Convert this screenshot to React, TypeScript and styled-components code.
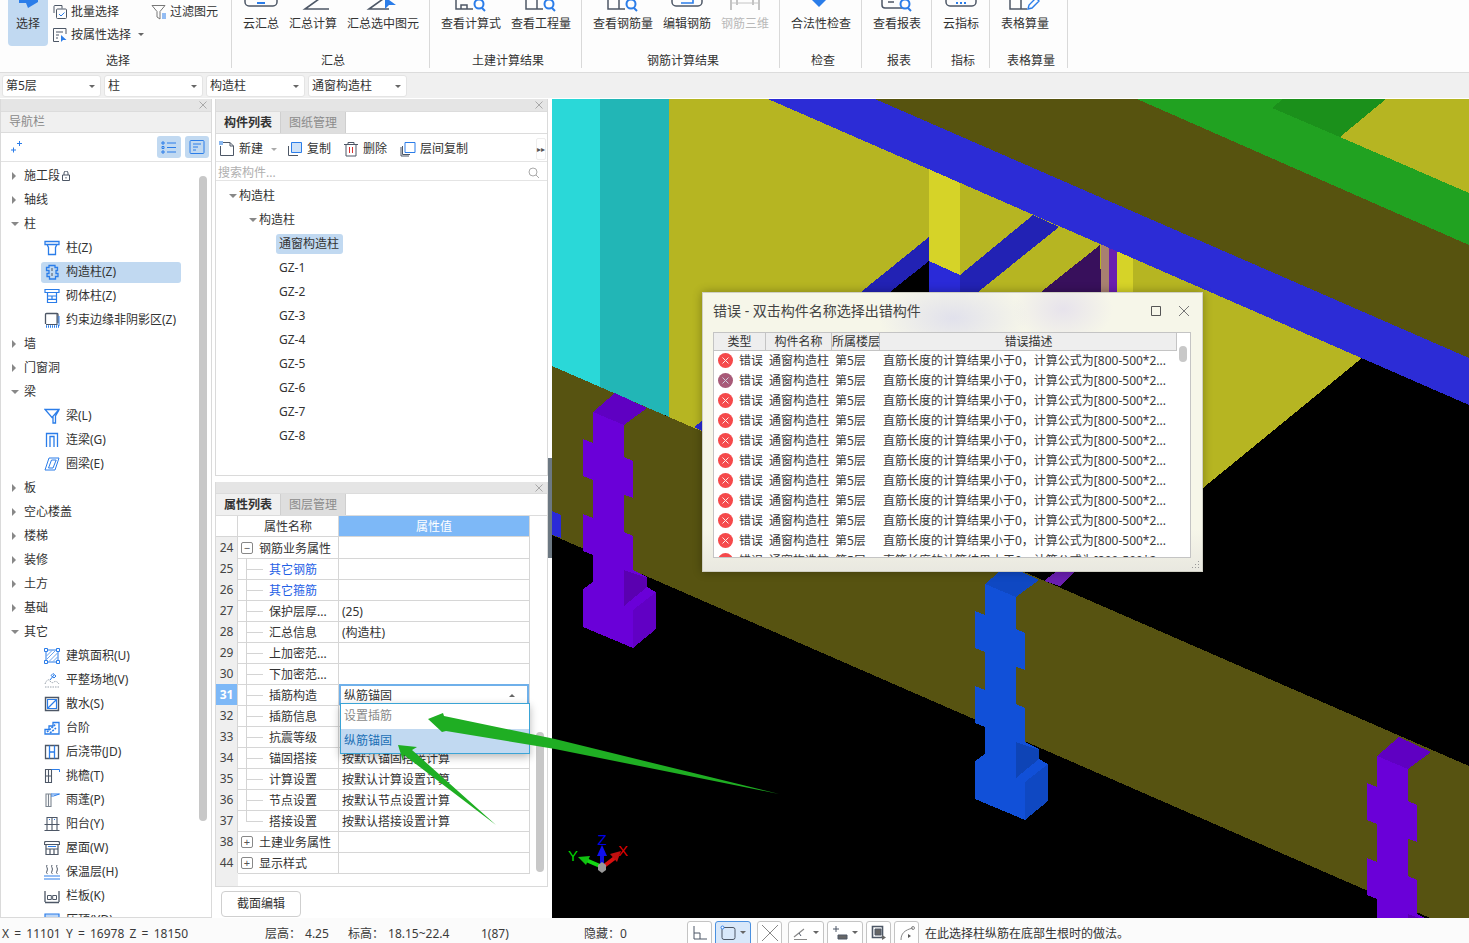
import React from 'react';
import styled, { createGlobalStyle } from 'styled-components';

const B = '#2b7de9';
const D = '#4d5766';
const G = '#c4c4c4';
const HILITE = '#c1d9f1';

const Global = createGlobalStyle`
  html, body { margin: 0; padding: 0; background: #fff; overflow: hidden; }
  * { box-sizing: border-box; }
  #root { width: 1469px; height: 943px; }
`;

const Page = styled.div`
  position: relative;
  width: 1469px;
  height: 943px;
  display: flex;
  flex-direction: column;
  overflow: hidden;
  background: #fff;
  color: #333;
  font: 12px/16px "Noto Sans", "Noto Sans CJK SC", sans-serif;
`;

/* ---------- ribbon ---------- */
const Ribbon = styled.div`
  height: 73px;
  flex: none;
  display: flex;
  background: #fdfdfd;
  border-bottom: 1px solid #dcdcdc;
  overflow: hidden;
`;
const Group = styled.div<{ $w: number }>`
  width: ${p => p.$w}px;
  height: 68px;
  flex: none;
  display: flex;
  flex-direction: column;
  border-right: 1px solid #d9d9d9;
`;
const GroupBody = styled.div`
  height: 53px;
  flex: none;
  display: flex;
  gap: 10px;
  padding-left: 11px;
`;
const GroupLabel = styled.div`
  height: 15px;
  text-align: center;
  padding-left: 5px;
`;
const BigBtn = styled.div<{ $off?: boolean }>`
  display: flex;
  flex-direction: column;
  align-items: center;
  height: 32px;
  white-space: nowrap;
  color: ${p => (p.$off ? '#b9b9b9' : '#333')};
`;
const BigIcon = styled.svg`
  width: 36px;
  height: 16px;
  flex: none;
  fill: none;
  stroke: ${D};
  stroke-width: 1.5;
`;
const SelectBody = styled.div`
  height: 53px;
  flex: none;
  display: flex;
  padding-left: 8px;
`;
const SelectTile = styled.div`
  width: 40px;
  height: 46px;
  background: ${HILITE};
  border-radius: 0 0 4px 4px;
  display: flex;
  flex-direction: column;
  align-items: center;
`;
const SelectGrid = styled.div`
  display: grid;
  grid-template-columns: 99px auto;
  grid-template-rows: 23px 23px;
  padding: 0 0 0 4px;
`;
const MiniBtn = styled.div<{ $span?: boolean }>`
  display: flex;
  align-items: center;
  gap: 3px;
  white-space: nowrap;
  ${p => (p.$span ? 'grid-column: 1 / span 2;' : '')}
`;
const Glyph = styled.svg<{ $s?: number }>`
  width: ${p => p.$s ?? 16}px;
  height: ${p => p.$s ?? 16}px;
  flex: none;
  fill: none;
  stroke: ${D};
  stroke-width: 1;
`;
const Caret = styled.i<{ $up?: boolean; $c?: string }>`
  display: inline-block;
  width: 0;
  height: 0;
  flex: none;
  border-left: 3px solid transparent;
  border-right: 3px solid transparent;
  ${p => (p.$up ? 'border-bottom' : 'border-top')}: 3px solid ${p => p.$c ?? '#666'};
`;

/* ---------- filter bar ---------- */
const FilterBar = styled.div`
  height: 25px;
  flex: none;
  display: flex;
  gap: 3px;
  padding: 2px 0 0 2px;
  background: #f0f0f0;
`;
const Combo = styled.div`
  width: 99px;
  height: 22px;
  display: flex;
  align-items: center;
  justify-content: space-between;
  padding: 0 5px 0 3px;
  background: #fff;
  border: 1px solid #e4e4e4;
  border-radius: 3px;
`;

/* ---------- main ---------- */
const Main = styled.div`
  flex: 1;
  min-height: 0;
  display: flex;
`;
const Strip = styled.div<{ $h?: number }>`
  height: ${p => p.$h ?? 11}px;
  flex: none;
  background: #e5e5e5;
  display: flex;
  justify-content: flex-end;
  align-items: center;
  padding-right: 4px;
  color: #aaa;
`;
const CloseX = styled.svg`
  width: 8px;
  height: 8px;
  stroke: #a8a8a8;
  stroke-width: 1;
`;
const Nav = styled.div`
  width: 212px;
  flex: none;
  margin-top: 1px;
  height: 819px;
  display: flex;
  flex-direction: column;
  border: 1px solid #dadada;
  border-width: 0 1px 1px 1px;
`;
const NavTitle = styled.div`
  height: 22px;
  flex: none;
  display: flex;
  align-items: center;
  padding-left: 8px;
  background: #f0f0f0;
  color: #8a8a8a;
  border-bottom: 1px solid #dcdcdc;
  border-top: 1px solid #dcdcdc;
`;
const NavTools = styled.div`
  height: 29px;
  flex: none;
  display: flex;
  align-items: center;
  padding: 0 2px 0 7px;
  gap: 4px;
  border-bottom: 1px solid #e2e2e2;
`;
const ToolPill = styled.div`
  width: 24px;
  height: 22px;
  display: flex;
  align-items: center;
  justify-content: center;
  background: ${HILITE};
  border-radius: 3px;
`;
const Spacer = styled.div`
  flex: 1;
`;
const NavTree = styled.div`
  position: relative;
  flex: 1;
  min-height: 0;
  overflow: hidden;
  padding-top: 2px;
`;
const NavThumb = styled.div`
  position: absolute;
  left: 198px;
  top: 14px;
  width: 8px;
  height: 645px;
  background: #c8c8c8;
  border-radius: 4px;
`;
const NavRow = styled.div<{ $kind: 'top' | 'leaf' }>`
  height: 24px;
  display: flex;
  align-items: center;
  white-space: nowrap;
  padding-left: ${p => (p.$kind === 'top' ? 10 : 41)}px;
`;
const Tri = styled.i<{ $open?: boolean }>`
  width: 0;
  height: 0;
  flex: none;
  ${p =>
    p.$open
      ? `border-left: 4px solid transparent; border-right: 4px solid transparent; border-top: 4px solid #888; margin-right: 5px;`
      : `border-top: 4px solid transparent; border-bottom: 4px solid transparent; border-left: 4px solid #888; margin: 0 8px 0 1px;`}
`;
const LeafPill = styled.div<{ $on?: boolean }>`
  height: 21px;
  width: ${p => (p.$on ? '140px' : 'auto')};
  display: flex;
  align-items: center;
  gap: 6px;
  margin-left: -1px;
  padding-left: 3px;
  border-radius: 3px;
  background: ${p => (p.$on ? HILITE : 'transparent')};
`;

const Mid = styled.div`
  width: 333px;
  margin: 1px 4px 0 3px;
  flex: none;
  display: flex;
  flex-direction: column;
`;
const Panel = styled.div<{ $h: number }>`
  height: ${p => p.$h}px;
  flex: none;
  display: flex;
  flex-direction: column;
  border: 1px solid #dadada;
  border-top: 0;
  overflow: hidden;
`;
const PanelGap = styled.div`
  height: 6px;
  flex: none;
`;
const Tabs = styled.div`
  height: 23px;
  flex: none;
  display: flex;
  border-top: 1px solid #dcdcdc;
  border-bottom: 1px solid #dcdcdc;
`;
const Tab = styled.div<{ $on?: boolean }>`
  width: 65px;
  text-align: center;
  line-height: 21px;
  font-weight: ${p => (p.$on ? 700 : 400)};
  background: ${p => (p.$on ? '#f0f0f0' : '#dedede')};
  color: ${p => (p.$on ? '#333' : '#8c8c8c')};
  border-right: 1px solid #cfcfcf;
`;
const CompTools = styled.div`
  height: 28px;
  flex: none;
  display: flex;
  align-items: center;
  padding: 3px 0 0 3px;
  border-bottom: 1px solid #e4e4e4;
`;
const CompBtn = styled.div<{ $ml?: number }>`
  display: flex;
  align-items: center;
  gap: 4px;
  margin-left: ${p => p.$ml ?? 0}px;
  white-space: nowrap;
`;
const More = styled.div`
  width: 10px;
  height: 22px;
  margin-right: 1px;
  display: flex;
  align-items: center;
  justify-content: center;
  font-size: 8px;
  color: #555;
  border: 1px solid #eee;
  border-radius: 2px;
`;
const Search = styled.div`
  height: 19px;
  flex: none;
  display: flex;
  align-items: center;
  justify-content: space-between;
  padding: 3px 7px 0 2px;
  color: #b0b0b0;
  border-bottom: 1px solid #e4e4e4;
`;
const CompTree = styled.div`
  flex: 1;
  padding-top: 3px;
`;
const CompRow = styled.div<{ $pl: number }>`
  height: 24px;
  display: flex;
  align-items: center;
  padding-left: ${p => p.$pl}px;
  white-space: nowrap;
`;
const CompChosen = styled.div`
  height: 20px;
  width: 67px;
  margin-left: -3px;
  padding-left: 3px;
  line-height: 20px;
  background: ${HILITE};
  border-radius: 3px;
`;

/* ---------- property grid ---------- */
const PropWrap = styled.div`
  position: relative;
  flex: 1;
  display: flex;
  flex-direction: column;
`;
const PropRow = styled.div<{ $h?: number }>`
  height: ${p => p.$h ?? 21}px;
  flex: none;
  display: grid;
  grid-template-columns: 22px 101px 191px;
`;
const IdxCell = styled.div<{ $on?: boolean; $head?: boolean }>`
  text-align: center;
  line-height: 21px;
  font-size: 12px;
  background: ${p => (p.$on ? '#7db8f7' : p.$head ? '#fff' : '#efefef')};
  color: ${p => (p.$on ? '#fff' : '#444')};
  font-weight: ${p => (p.$on ? 700 : 400)};
  border-right: 1px solid #d6d6d6;
  border-bottom: 1px solid #d6d6d6;
`;
const NameCell = styled.div<{ $head?: boolean; $link?: boolean }>`
  position: relative;
  display: flex;
  align-items: center;
  justify-content: ${p => (p.$head ? 'center' : 'flex-start')};
  white-space: nowrap;
  color: ${p => (p.$link ? '#1f5fe6' : '#333')};
  border-right: 1px solid #d6d6d6;
  border-bottom: 1px solid #d6d6d6;
`;
const HeadText = styled.span`
  padding-top: 2px;
`;
const RowText = styled.span`
  position: relative;
  top: 1px;
`;
const ValueCell = styled.div<{ $head?: boolean }>`
  position: relative;
  display: flex;
  align-items: center;
  justify-content: ${p => (p.$head ? 'center' : 'flex-start')};
  padding-left: ${p => (p.$head ? 0 : 3)}px;
  white-space: nowrap;
  background: ${p => (p.$head ? '#7db8f7' : 'transparent')};
  color: ${p => (p.$head ? '#fff' : '#333')};
  border-right: 1px solid #d6d6d6;
  border-bottom: 1px solid #d6d6d6;
`;
const EditBox = styled.div`
  position: absolute;
  inset: 0 0 0 0;
  display: flex;
  align-items: center;
  justify-content: space-between;
  padding: 0 12px 0 3px;
  background: #fff;
  border: 2px solid #6fb0ea;
  border-bottom-width: 1px;
`;
const Drop = styled.div`
  position: absolute;
  left: 1px;
  top: 19px;
  width: 190px;
  height: 51px;
  z-index: 3;
  background: #fff;
  border: 1px solid #3aa4d6;
  box-shadow: 0 3px 8px rgba(0, 0, 0, 0.28);
`;
const DropItem = styled.div<{ $on?: boolean }>`
  height: 24.5px;
  line-height: 24px;
  padding-left: 3px;
  color: ${p => (p.$on ? '#1b6fb5' : '#8a8a8a')};
  background: ${p => (p.$on ? HILITE : 'transparent')};
`;
const Toggle = styled.span`
  width: 12px;
  height: 12px;
  flex: none;
  margin: 0 6px 0 3px;
  border: 1px solid #888;
  border-radius: 2px;
  display: flex;
  align-items: center;
  justify-content: center;
  font-size: 11px;
  line-height: 10px;
  color: #555;
`;
const Connector = styled.span<{ $last?: boolean }>`
  position: relative;
  width: 23px;
  height: 100%;
  flex: none;
  margin-left: 8px;
  &::before {
    content: '';
    position: absolute;
    left: 0;
    top: 0;
    height: ${p => (p.$last ? '50%' : '100%')};
    border-left: 1px solid #d4d4d4;
  }
  &::after {
    content: '';
    position: absolute;
    left: 0;
    top: 50%;
    width: 17px;
    border-top: 1px solid #d4d4d4;
  }
`;
const PropThumb = styled.div`
  position: absolute;
  right: 3px;
  top: 216px;
  width: 8px;
  height: 140px;
  background: #c8c8c8;
  border-radius: 4px;
`;
const IdxFill = styled.div`
  width: 22px;
  flex: 1;
  background: #efefef;
`;
const FooterBar = styled.div`
  height: 30px;
  flex: none;
  padding: 4px 0 0 6px;
`;
const Ghost = styled.div`
  width: 80px;
  height: 26px;
  text-align: center;
  line-height: 24px;
  background: #fff;
  border: 1px solid #cfcfcf;
  border-radius: 4px;
`;

/* ---------- viewport ---------- */
const Viewport = styled.div`
  position: relative;
  flex: 1;
  margin-top: 1px;
  height: 819px;
  background: #000;
`;
const Scene = styled.svg`
  display: block;
  width: 917px;
  height: 819px;
`;
const SplitHandle = styled.div`
  position: absolute;
  left: -4px;
  top: 359px;
  width: 4px;
  height: 100px;
  background: #6c7882;
`;
const Dialog = styled.div`
  position: absolute;
  left: 150px;
  top: 193px;
  width: 501px;
  height: 280px;
  display: flex;
  flex-direction: column;
  padding: 0 11px 13px 10px;
  border: 1px solid #cfcfc4;
  background:
    radial-gradient(ellipse 75px 40px at 250px 25px, rgba(224, 224, 236, 0.95), transparent),
    radial-gradient(ellipse 50px 36px at 360px 16px, rgba(230, 226, 236, 0.95), transparent),
    linear-gradient(#f6f6e9 85%, #e9e8e0);
  box-shadow: 0 0 9px rgba(0, 0, 0, 0.3);
`;
const DialogBar = styled.div`
  height: 39px;
  flex: none;
  display: flex;
  align-items: center;
  justify-content: space-between;
  padding-bottom: 3px;
  font-size: 14px;
  color: #444;
`;
const WinBtns = styled.div`
  display: flex;
  align-items: center;
  gap: 16px;
  padding-right: 1px;
`;
const ErrTable = styled.div`
  position: relative;
  flex: 1;
  min-height: 0;
  background: #fff;
  border: 1px solid #c4c4c4;
  overflow: hidden;
`;
const ErrHead = styled.div`
  height: 18px;
  width: 463px;
  display: grid;
  grid-template-columns: 52px 66px 48px 297px;
  background: #eee;
  border-bottom: 1px solid #c4c4c4;
  border-right: 1px solid #c4c4c4;
`;
const ErrHeadCell = styled.div`
  text-align: center;
  line-height: 17px;
  white-space: nowrap;
  border-right: 1px solid #c4c4c4;
  &:last-child {
    border-right: 0;
  }
`;
const ErrRow = styled.div`
  height: 20px;
  display: flex;
  align-items: center;
  white-space: nowrap;
  padding-left: 4px;
  color: #3a3a3a;
`;
const ErrCell = styled.span<{ $w: number; $pl?: number }>`
  width: ${p => p.$w}px;
  padding-left: ${p => p.$pl ?? 0}px;
  flex: none;
`;
const ErrDot = styled.span`
  display: flex;
  flex: none;
  margin-top: -2px;
`;
const ErrThumb = styled.div`
  position: absolute;
  right: 3px;
  top: 13px;
  width: 8px;
  height: 16px;
  background: #c8c8c8;
  border-radius: 4px;
`;
const Grip = styled.svg`
  position: absolute;
  right: 2px;
  bottom: 2px;
  width: 9px;
  height: 9px;
`;
const Gizmo = styled.text<{ $c: string }>`
  font: 15px "Liberation Sans", sans-serif;
  fill: ${p => p.$c};
  text-anchor: middle;
`;

/* ---------- status bar ---------- */
const Status = styled.div`
  height: 25px;
  flex: none;
  display: flex;
  align-items: flex-start;
  background: #fbfbfb;
  overflow: hidden;
  padding-left: 2px;
`;
const StatusItem = styled.div<{ $w: number; $ws?: number }>`
  width: ${p => p.$w}px;
  flex: none;
  line-height: 31px;
  white-space: nowrap;
  word-spacing: ${p => p.$ws ?? 0}px;
  color: #3a3a3a;
`;
const StatusVal = styled.span<{ $ml?: number }>`
  margin-left: ${p => p.$ml ?? 4}px;
`;
const StatusBtn = styled.div<{ $w: number; $on?: boolean; $ml: number }>`
  width: ${p => p.$w}px;
  height: 28px;
  margin: 3px 0 0 ${p => p.$ml}px;
  flex: none;
  display: flex;
  align-items: flex-start;
  gap: 4px;
  padding: 3px 0 0 4px;
  border: 1px solid ${p => (p.$on ? '#4a90e0' : '#c4c4c4')};
  border-radius: 3px;
  background: ${p => (p.$on ? '#d8e8fa' : '#fff')};
`;
const CaretSlot = styled.span`
  padding-top: 6px;
  display: flex;
`;
const Hint = styled.div`
  margin-left: 6px;
  line-height: 31px;
  white-space: nowrap;
  color: #333;
`;
const Annotations = styled.svg`
  position: absolute;
  left: 0;
  top: 0;
  width: 1469px;
  height: 943px;
  z-index: 5;
  pointer-events: none;
`;

/* ---------- drawings ---------- */
const X = () => (
  <CloseX viewBox="0 0 8 8">
    <path d="M0.5 0.5l7 7M7.5 0.5l-7 7" />
  </CloseX>
);

const Glass = ({ x }: { x: number }) => (
  <g stroke={B} strokeWidth="2">
    <circle cx={x} cy="4" r="4.5" />
    <path d={`M${x + 3} 8l3 3`} />
  </g>
);
const big: Record<string, React.ReactNode> = {
  cloud: (
    <>
      <path d="M2-4v6a4 4 0 0 0 4 4h24a4 4 0 0 0 4-4v-6" />
      <path d="M14 3h8" stroke={B} strokeWidth="2" />
    </>
  ),
  sigma: <path d="M24-1L10 9h24" strokeWidth="1.6" />,
  sigmaSel: (
    <>
      <path d="M18-1L4 9h20" strokeWidth="1.6" />
      <path d="M20-3l0 12 4-4 7 0z" fill={B} stroke="none" />
    </>
  ),
  calc: (
    <>
      <path d="M3-2v11h17M8 5h6v4H8z" />
      <Glass x={26} />
    </>
  ),
  prj: (
    <>
      <path d="M3-2v11h17M14-2v11" />
      <Glass x={26} />
    </>
  ),
  edit: (
    <>
      <path d="M3-4v6a4 4 0 0 0 4 4h22a4 4 0 0 0 4-4v-6" />
      <path d="M12 3h12v-5" stroke={B} strokeWidth="1.6" />
    </>
  ),
  rebar: (
    <g stroke={G} strokeWidth="2">
      <path d="M4 0v10M32 0v10M10 0v5M26 0v5" />
      <path d="M4 3h28" strokeWidth="1" />
    </g>
  ),
  pin: <path d="M9-2h14v2l-7 7-7-7z" fill={B} stroke="none" />,
  report: (
    <>
      <path d="M3-2v7a3 3 0 0 0 3 3h17M9 2h6" />
      <Glass x={26} />
    </>
  ),
  index: (
    <>
      <path d="M3-4v6a4 4 0 0 0 4 4h22a4 4 0 0 0 4-4v-6" />
      <path d="M14 2v2M18 2v2M22 2v2" stroke={B} strokeWidth="2" />
    </>
  ),
  table: (
    <>
      <path d="M3-2v11h17M14-2v11" />
      <path d="M21 9l1-4 7-7 3 3-7 7z" stroke={B} strokeWidth="1.4" />
    </>
  ),
};

const S = ({ c = B, children }: { c?: string; children: React.ReactNode }) => (
  <Glyph viewBox="0 0 16 16" style={{ stroke: c }}>
    {children}
  </Glyph>
);
const icons: Record<string, React.ReactNode> = {
  column: (
    <S>
      <path d="M1 1.500h14v3H1zM3 4.500l1.500 3v7h7v-7l1.500-3" strokeWidth="1.3" />
    </S>
  ),
  struct: (
    <S>
      <path d="M5 1.500h6v2h2.500v3H12v3h2v3h-2.500v2.500h-6V12.500H3v-3h2v-3H2.500v-3H5z" strokeWidth="1.3" />
      <path d="M8 4v3M8 9v3" stroke={D} />
    </S>
  ),
  brick: (
    <S>
      <path d="M1 1.500h14v3H1zM3.500 4.500v10h9v-10M3.500 8h9M3.500 11.300h9M8 8v3.300" strokeWidth="1.2" />
    </S>
  ),
  edge: (
    <>
      <Glyph viewBox="0 0 16 16">
        <path d="M1.500 12V2.500a1 1 0 0 1 1-1H13a1 1 0 0 1 1 1V11" strokeWidth="1.3" />
        <path d="M2 12.500h11V2" stroke={D} strokeWidth="1.1" />
        <path d="M2 14.500h13V4" stroke={B} strokeWidth="2.500" strokeDasharray="1 1" />
      </Glyph>
    </>
  ),
  beam: (
    <S>
      <path d="M1 1.500h14L8 9.500zM9 9v6h2.500V8L15 2" strokeWidth="1.3" />
    </S>
  ),
  link: (
    <S>
      <path d="M2.500 15V1.500h11V15M6 15V4.500h4V15" strokeWidth="1.3" />
    </S>
  ),
  ring: (
    <S>
      <path d="M5 2h10l-4 12H1zM7.500 4h4.700L9 12H4.500z" strokeWidth="1" />
    </S>
  ),
  area: (
    <S>
      <path d="M2 2h12v12H2z" strokeWidth="1" />
      <path d="M2.500 8l5.500-5.500M2.500 11.500l9-9M5 13.500l8.500-8.500M9 13.500l4.500-4.500" stroke="#6aa5ee" />
      <path d="M.5.500h3v3h-3zM12.500.500h3v3h-3zM.5 12.500h3v3h-3zM12.500 12.500h3v3h-3z" fill="#fff" />
    </S>
  ),
  level: (
    <S c="#9aa3ad">
      <path d="M6 8l4-5M9 1.500l3 2.500-2 2-3-2.500z" stroke={B} />
      <path d="M1 12c2-5 4-5 5-3s3 2 4 1 3-1 5 2M1 15h14" strokeDasharray="1.500 1" />
    </S>
  ),
  apron: (
    <S c={D}>
      <path d="M1.500 1.500h13v13h-13z" strokeWidth="1.4" />
      <path d="M3.500 3.500h9v9h-9zM3.500 12.500l9-9" stroke={B} strokeWidth="1.200" />
    </S>
  ),
  steps: (
    <S>
      <path d="M1 14V9.500h4V6h4V2.500h6V14z" strokeWidth="1.3" />
      <path d="M3 12l9-8M6 13l6-5" stroke={B} strokeDasharray="2 1" strokeWidth="1.600" />
    </S>
  ),
  joint: (
    <S c={D}>
      <path d="M1.500 1.500h13v13h-13z" strokeWidth="1.3" />
      <path d="M5.500 1.500v13M10.500 1.500v13M5.500 8h5" stroke={B} strokeWidth="1.300" />
    </S>
  ),
  eave: (
    <S c={D}>
      <path d="M1.500 1.500h6v13h-6zM1.500 8h6M4.500 1.500V14" strokeWidth="1.100" />
      <path d="M7.500 1.500h8V4" stroke={B} strokeWidth="1" />
    </S>
  ),
  canopy: (
    <S c="#7c8590">
      <path d="M2 2h5v12.500H2zM4.500 2v12" strokeWidth="1.100" />
      <path d="M7 2h8.500l-6 2H7" stroke={B} strokeWidth="1" />
    </S>
  ),
  balcony: (
    <S c={D}>
      <path d="M3 8V1.500h10V8M8 1.500V8M.5 8.500h15M.5 14.500h15M3 8.500v6M8 8.500v6M13 8.500v6" strokeWidth="1.100" />
      <path d="M5 4l1-1M10 4l1-1" stroke={B} />
    </S>
  ),
  roof: (
    <S c={D}>
      <path d="M1 1.500h14l1 3H0zM2 4.500v10h12v-10M2 9h12M6 9v5.500h4V9" strokeWidth="1.200" />
      <path d="M4 6.500h8" stroke={B} />
    </S>
  ),
  warm: (
    <S c={D}>
      <path d="M3 1c-1.500 2 1.500 3 0 6s1 2 0 3M8 1c-1.500 2 1.500 3 0 6s1 2 0 3M13 1c-1.500 2 1.500 3 0 6s1 2 0 3" />
      <path d="M0 12h16M0 15h16" stroke={B} strokeWidth="1.200" />
    </S>
  ),
  parapet: (
    <S c={D}>
      <path d="M1 3v11M15 3v11M1 14.500h14" strokeWidth="1.300" />
      <path d="M3.500 7.500h3.800v4H3.500zM8.700 7.500h3.800v4H8.700z" stroke={D} />
    </S>
  ),
  coping: (
    <S>
      <path d="M1 2h14v8H1z" fill="#bcd6f6" strokeWidth="1.200" />
    </S>
  ),
};

const ErrIcon = ({ dim }: { dim?: boolean }) => (
  <ErrDot>
    <Glyph $s={15} viewBox="0 0 15 15" style={{ stroke: 'none' }}>
      <circle cx="7.500" cy="7.500" r="7.500" fill={dim ? '#a85a78' : '#f5494b'} />
      <path d="M4.500 4.500l6 6M10.500 4.500l-6 6" stroke={dim ? '#cfcfe0' : '#ffeaea'} strokeWidth="1" />
    </Glyph>
  </ErrDot>
);

/* ---------- 3D scene (page coordinates) ---------- */
const poly = (pts: string, fill: string) => <polygon points={pts} fill={fill} />;

const Column = ({ dx, dy, front, side, top, notch }: { dx: number; dy: number; front: string; side: string; top: string; notch: string }) => (
  <g transform={`translate(${dx} ${dy})`}>
    {poly('615,393 647,408 624,425 593,412', top)}
    {poly('593,412 624,425 624,457 633,461 633,498 624,495 624,532 633,536 633,570 647,577 647,587 656,592 633,610 633,648 583,627 583,589 593,582 593,555 583,551 583,514 593,518 593,480 583,476 583,439 593,443', front)}
    {poly('624,570 647,578 647,587 624,606', notch)}
    {poly('633,610 656,592 656,629 633,648', side)}
  </g>
);

const SceneArt = () => (
  <Scene viewBox="552 99 917 819" shapeRendering="crispEdges">
    <rect x="552" y="99" width="917" height="819" fill="#000" />
    {poly('669,99 768,99 1362,358 1203,488 1020,572 669,417', '#b6b522')}
    {poly('1386,99 1469,99 1469,193 1340,137', '#b6b522')}
    {poly('861,292 929,237 929,261 890,292', '#2222b4')}
    {poly('890,292 929,261 929,292', '#000')}
    {poly('960,275 1033,215 1059,227 978,292 960,292', '#2222b4')}
    {poly('929,169 960,183 960,275 929,261', '#d6d328')}
    {poly('929,261 960,275 960,292 929,292', '#2a2ad8')}
    {poly('1041,292 1100,245 1101,292', '#38105c')}
    {poly('1101,240 1109,244 1109,292 1101,292', '#a88070')}
    {poly('1109,244 1117,247 1117,292 1109,292', '#6a1fb0')}
    {poly('1117,247 1133,254 1133,292 1117,292', '#d6d328')}
    {poly('552,99 600,99 600,387 552,366', '#2ad8d8')}
    {poly('600,99 669,99 669,417 600,387', '#22b6b6')}
    {poly('875,99 1137,99 1469,245 1469,358', '#57530f')}
    {poly('1137,99 1386,99 1340,137 1469,193 1469,245', '#21a221')}
    {poly('1283,99 1386,99 1340,137 1272,108', '#1b901b')}
    {poly('768,99 875,99 1469,358 1469,405', '#2c2cd6')}
    {poly('694,427 702,421 702,431', '#2a2ad8')}
    {poly('1058,570 1076,570 1060,586 1044,581', '#6a1fb0')}
    {poly('552,366 1469,766 1469,935 552,535', '#575311')}
    {poly('552,511 561,515 561,538 552,535', '#2a2ad8')}
    <Column dx={0} dy={0} front="#6a00d8" side="#6100c4" top="#5f00c2" notch="#5a00b0" />
    <Column dx={392} dy={172} front="#1150d8" side="#0f48c2" top="#0f48c2" notch="#0e44b6" />
    <Column dx={784} dy={344} front="#6a00d8" side="#6100c4" top="#5f00c2" notch="#5a00b0" />
    <g shapeRendering="auto">
      <path d="M604 866L616 857" stroke="#d81010" strokeWidth="4" />
      {poly('610,854 621,851 617,862', '#c01010')}
      <path d="M600 866L586 860" stroke="#12d812" strokeWidth="4" />
      {poly('578,857 590,856 586,865', '#10c010')}
      <path d="M602 866V853" stroke="#1010e0" strokeWidth="4" />
      {poly('602,845 607,856 597,856', '#1010f0')}
      <path d="M598 865l4-3 4 3v5l-4 3-4-3z" fill="#9a9a9a" />
      <Gizmo $c="#0000e8" x="602" y="845">Z</Gizmo>
      <Gizmo $c="#00d800" x="573" y="861">Y</Gizmo>
      <Gizmo $c="#e00000" x="623" y="856">X</Gizmo>
    </g>
  </Scene>
);

/* ---------- data ---------- */
type Nv = { t: string; open?: boolean; icon?: string; on?: boolean; lock?: boolean };
const navItems: Nv[] = [
  { t: '施工段', lock: true },
  { t: '轴线' },
  { t: '柱', open: true },
  { t: '柱(Z)', icon: 'column' },
  { t: '构造柱(Z)', icon: 'struct', on: true },
  { t: '砌体柱(Z)', icon: 'brick' },
  { t: '约束边缘非阴影区(Z)', icon: 'edge' },
  { t: '墙' },
  { t: '门窗洞' },
  { t: '梁', open: true },
  { t: '梁(L)', icon: 'beam' },
  { t: '连梁(G)', icon: 'link' },
  { t: '圈梁(E)', icon: 'ring' },
  { t: '板' },
  { t: '空心楼盖' },
  { t: '楼梯' },
  { t: '装修' },
  { t: '土方' },
  { t: '基础' },
  { t: '其它', open: true },
  { t: '建筑面积(U)', icon: 'area' },
  { t: '平整场地(V)', icon: 'level' },
  { t: '散水(S)', icon: 'apron' },
  { t: '台阶', icon: 'steps' },
  { t: '后浇带(JD)', icon: 'joint' },
  { t: '挑檐(T)', icon: 'eave' },
  { t: '雨蓬(P)', icon: 'canopy' },
  { t: '阳台(Y)', icon: 'balcony' },
  { t: '屋面(W)', icon: 'roof' },
  { t: '保温层(H)', icon: 'warm' },
  { t: '栏板(K)', icon: 'parapet' },
  { t: '压顶(YD)', icon: 'coping' },
];

const ribbon: { label: string; w: number; items: [string, string, boolean?][] }[] = [
  { label: '汇总', w: 198, items: [['云汇总', 'cloud'], ['汇总计算', 'sigma'], ['汇总选中图元', 'sigmaSel']] },
  { label: '土建计算结果', w: 152, items: [['查看计算式', 'calc'], ['查看工程量', 'prj']] },
  { label: '钢筋计算结果', w: 198, items: [['查看钢筋量', 'prj'], ['编辑钢筋', 'edit'], ['钢筋三维', 'rebar', true]] },
  { label: '检查', w: 82, items: [['合法性检查', 'pin']] },
  { label: '报表', w: 70, items: [['查看报表', 'report']] },
  { label: '指标', w: 58, items: [['云指标', 'index']] },
  { label: '表格算量', w: 78, items: [['表格算量', 'table']] },
];

type Pr = { i: number; n: string; v?: string; kind?: 'minus' | 'plus' | 'link' | 'last' };
const props: Pr[] = [
  { i: 24, n: '钢筋业务属性', kind: 'minus' },
  { i: 25, n: '其它钢筋', kind: 'link' },
  { i: 26, n: '其它箍筋', kind: 'link' },
  { i: 27, n: '保护层厚...', v: '(25)' },
  { i: 28, n: '汇总信息', v: '(构造柱)' },
  { i: 29, n: '上加密范...' },
  { i: 30, n: '下加密范...' },
  { i: 31, n: '插筋构造' },
  { i: 32, n: '插筋信息' },
  { i: 33, n: '抗震等级' },
  { i: 34, n: '锚固搭接', v: '按默认锚固搭接计算' },
  { i: 35, n: '计算设置', v: '按默认计算设置计算' },
  { i: 36, n: '节点设置', v: '按默认节点设置计算' },
  { i: 37, n: '搭接设置', v: '按默认搭接设置计算', kind: 'last' },
  { i: 38, n: '土建业务属性', kind: 'plus' },
  { i: 44, n: '显示样式', kind: 'plus' },
];

const errRows = Array.from({ length: 11 }, (_, i) => i);

export default function App() {
  return (
    <Page>
      <Global />
      <Ribbon>
        <Group $w={232}>
          <SelectBody>
            <SelectTile>
              <BigIcon viewBox="0 0 36 16" style={{ stroke: 'none' }}>
                <path d="M9-3h19v5l-10 6-2-5H9z" fill={B} />
              </BigIcon>
              选择
            </SelectTile>
            <SelectGrid>
              <MiniBtn>
                <Glyph viewBox="0 0 16 16">
                  <path d="M2 9V2.500a1 1 0 0 1 1-1h7v3" />
                  <path d="M5.500 5h8a1 1 0 0 1 1 1v7.500a1 1 0 0 1-1 1h-8a1 1 0 0 1-1-1V6a1 1 0 0 1 1-1z" />
                  <path d="M7 10l2 2 3.500-3.500" stroke={B} />
                </Glyph>
                批量选择
              </MiniBtn>
              <MiniBtn>
                <Glyph viewBox="0 0 16 16" style={{ stroke: '#777' }}>
                  <path d="M1 1.500h13L9 7.500V15l-3-2V7.500z" />
                  <path d="M11 10h4M11 12h4M11 14h4" stroke={B} />
                </Glyph>
                过滤图元
              </MiniBtn>
              <MiniBtn $span>
                <Glyph viewBox="0 0 16 16">
                  <path d="M14 7V1.500H1.500v13H7M4 5h7M4 8h3M4 11h2" />
                  <path d="M9 8v7l2-2h3.500z" fill={B} stroke="none" />
                </Glyph>
                按属性选择
                <Caret style={{ marginLeft: 4 }} />
              </MiniBtn>
            </SelectGrid>
          </SelectBody>
          <GroupLabel>选择</GroupLabel>
        </Group>
        {ribbon.map(g => (
          <Group key={g.label} $w={g.w}>
            <GroupBody>
              {g.items.map(([t, ic, off]) => (
                <BigBtn key={t} $off={off}>
                  <BigIcon viewBox="0 0 36 16">{big[ic]}</BigIcon>
                  {t}
                </BigBtn>
              ))}
            </GroupBody>
            <GroupLabel>{g.label}</GroupLabel>
          </Group>
        ))}
      </Ribbon>

      <FilterBar>
        {['第5层', '柱', '构造柱', '通窗构造柱'].map(t => (
          <Combo key={t}>
            {t}
            <Caret />
          </Combo>
        ))}
      </FilterBar>

      <Main>
        <Nav>
          <Strip $h={12}>
            <X />
          </Strip>
          <NavTitle>导航栏</NavTitle>
          <NavTools>
            <Glyph viewBox="0 0 16 16" style={{ stroke: B }}>
              <path d="M9 4.500h5M11.500 2v5M3 11h5M5.500 8.500v5" />
            </Glyph>
            <Spacer />
            <ToolPill>
              <Glyph viewBox="0 0 16 16" style={{ stroke: B }}>
                <path d="M1 3h2v2H1zM1 7.500h2v2H1zM1 12h2v2H1zM6 4h9M6 8.500h9M6 13h9" />
              </Glyph>
            </ToolPill>
            <ToolPill>
              <Glyph viewBox="0 0 16 16" style={{ stroke: B }}>
                <path d="M2 1.500h12a1 1 0 0 1 1 1v11a1 1 0 0 1-1 1H2a1 1 0 0 1-1-1v-11a1 1 0 0 1 1-1zM4 5h8M4 8h5M4 11h3" />
              </Glyph>
            </ToolPill>
          </NavTools>
          <NavTree>
            {navItems.map(n =>
              n.icon ? (
                <NavRow key={n.t} $kind="leaf">
                  <LeafPill $on={n.on}>
                    {icons[n.icon]}
                    {n.t}
                  </LeafPill>
                </NavRow>
              ) : (
                <NavRow key={n.t} $kind="top">
                  <Tri $open={n.open} />
                  {n.t}
                  {n.lock && (
                    <Glyph $s={10} viewBox="0 0 10 10" style={{ marginLeft: 1 }}>
                      <path d="M1.500 4h7v5.500h-7zM3 4V2a2 2 0 0 1 4 0v2M5 6v1.500" />
                    </Glyph>
                  )}
                </NavRow>
              ),
            )}
            <NavThumb />
          </NavTree>
        </Nav>

        <Mid>
          <Panel $h={377}>
            <Strip $h={12}>
              <X />
            </Strip>
            <Tabs>
              <Tab $on>构件列表</Tab>
              <Tab>图纸管理</Tab>
            </Tabs>
            <CompTools>
              <CompBtn>
                <Glyph viewBox="0 0 16 16">
                  <path d="M4 1.500h7l3.500 3.500v9.500h-13V5" />
                  <path d="M11 1.500V5h3.500" />
                  <path d="M0 0h4v4H0z" fill="#8ab8f0" stroke="none" />
                </Glyph>
                新建
                <Caret style={{ marginLeft: 4 }} $c="#aaa" />
              </CompBtn>
              <CompBtn $ml={10}>
                <Glyph viewBox="0 0 16 16">
                  <path d="M1.500 5v9.500H11" />
                  <path d="M4.500 1.500h10v10h-10z" fill="#cfe2f8" stroke={B} />
                </Glyph>
                复制
              </CompBtn>
              <CompBtn $ml={12}>
                <Glyph viewBox="0 0 16 16">
                  <path d="M1 3.500h14M5 3.500V1.500h6v2M3 3.500v11.500h10V3.500" />
                  <path d="M6.500 6v6M9.500 6v6" stroke="#d83030" />
                </Glyph>
                删除
              </CompBtn>
              <CompBtn $ml={13}>
                <Glyph viewBox="0 0 16 16">
                  <path d="M1 6v9h8M2.500 5v8.500H10" />
                  <path d="M5 1.500h10v10H5z" fill="#fff" stroke={B} />
                </Glyph>
                层间复制
              </CompBtn>
              <Spacer />
              <More>▸▸</More>
            </CompTools>
            <Search>
              搜索构件...
              <Glyph $s={12} viewBox="0 0 12 12" style={{ stroke: '#aaa' }}>
                <circle cx="5" cy="5" r="4" />
                <path d="M8 8l3 3" />
              </Glyph>
            </Search>
            <CompTree>
              <CompRow $pl={13}>
                <Tri $open style={{ marginRight: 2 }} />
                构造柱
              </CompRow>
              <CompRow $pl={33}>
                <Tri $open style={{ marginRight: 2 }} />
                构造柱
              </CompRow>
              <CompRow $pl={63}>
                <CompChosen>通窗构造柱</CompChosen>
              </CompRow>
              {[1, 2, 3, 4, 5, 6, 7, 8].map(i => (
                <CompRow key={i} $pl={63}>
                  GZ-{i}
                </CompRow>
              ))}
            </CompTree>
          </Panel>
          <PanelGap />
          <Panel $h={405}>
            <Strip>
              <X />
            </Strip>
            <Tabs>
              <Tab $on>属性列表</Tab>
              <Tab>图层管理</Tab>
            </Tabs>
            <PropWrap>
              <PropRow>
                <IdxCell $head />
                <NameCell $head>
                  <HeadText>属性名称</HeadText>
                </NameCell>
                <ValueCell $head>
                  <HeadText>属性值</HeadText>
                </ValueCell>
              </PropRow>
              {props.map(p => (
                <PropRow key={p.i}>
                  <IdxCell $on={p.i === 31}>{p.i}</IdxCell>
                  <NameCell $link={p.kind === 'link'}>
                    {p.kind === 'minus' || p.kind === 'plus' ? (
                      <Toggle>{p.kind === 'minus' ? '−' : '+'}</Toggle>
                    ) : (
                      <Connector $last={p.kind === 'last'} />
                    )}
                    <RowText>{p.n}</RowText>
                  </NameCell>
                  <ValueCell>
                    {p.v && <RowText>{p.v}</RowText>}
                    {p.i === 31 && (
                      <>
                        <EditBox>
                          <RowText>纵筋锚固</RowText>
                          <Caret $up />
                        </EditBox>
                        <Drop>
                          <DropItem>设置插筋</DropItem>
                          <DropItem $on>纵筋锚固</DropItem>
                        </Drop>
                      </>
                    )}
                  </ValueCell>
                </PropRow>
              ))}
              <IdxFill />
              <PropThumb />
            </PropWrap>
          </Panel>
          <FooterBar>
            <Ghost>截面编辑</Ghost>
          </FooterBar>
        </Mid>

        <Viewport>
          <SceneArt />
          <SplitHandle />
          <Dialog>
            <DialogBar>
              错误 - 双击构件名称选择出错构件
              <WinBtns>
                <Glyph $s={12} viewBox="0 0 12 12" style={{ stroke: '#555' }}>
                  <path d="M1.500 1.500h9v9h-9z" />
                </Glyph>
                <Glyph $s={12} viewBox="0 0 12 12" style={{ stroke: '#777' }}>
                  <path d="M1 1l10 10M11 1L1 11" />
                </Glyph>
              </WinBtns>
            </DialogBar>
            <ErrTable>
              <ErrHead>
                <ErrHeadCell>类型</ErrHeadCell>
                <ErrHeadCell>构件名称</ErrHeadCell>
                <ErrHeadCell>所属楼层</ErrHeadCell>
                <ErrHeadCell>错误描述</ErrHeadCell>
              </ErrHead>
              {errRows.map(i => (
                <ErrRow key={i}>
                  <ErrIcon dim={i === 1} />
                  <ErrCell $w={36} $pl={6}>错误</ErrCell>
                  <ErrCell $w={66}>通窗构造柱</ErrCell>
                  <ErrCell $w={48}>第5层</ErrCell>
                  直筋长度的计算结果小于0，计算公式为[800-500*2...
                </ErrRow>
              ))}
              <ErrThumb />
            </ErrTable>
            <Grip viewBox="0 0 9 9">
              <path d="M7 1h1v1H7zM4 4h1v1H4zM7 4h1v1H7zM1 7h1v1H1zM4 7h1v1H4zM7 7h1v1H7z" fill="#999" />
            </Grip>
          </Dialog>
        </Viewport>
      </Main>

      <Status>
        <StatusItem $w={263} $ws={2.1}>X = 11101 Y = 16978 Z = 18150</StatusItem>
        <StatusItem $w={83}>
          层高：<StatusVal>4.25</StatusVal>
        </StatusItem>
        <StatusItem $w={133}>
          标高：<StatusVal>18.15~22.4</StatusVal>
        </StatusItem>
        <StatusItem $w={103}>1(87)</StatusItem>
        <StatusItem $w={103}>
          隐藏：<StatusVal $ml={0}>0</StatusVal>
        </StatusItem>
        <StatusBtn $w={25} $ml={0}>
          <Glyph viewBox="0 0 16 16">
            <path d="M2 1v13h13M2 8h6v6" />
          </Glyph>
        </StatusBtn>
        <StatusBtn $w={36} $ml={3} $on>
          <Glyph viewBox="0 0 16 16">
            <rect x="2" y="2.500" width="13" height="12" rx="2" />
            <circle cx="2.500" cy="2.500" r="1.500" fill="#fff" stroke={B} />
          </Glyph>
          <CaretSlot>
            <Caret />
          </CaretSlot>
        </StatusBtn>
        <StatusBtn $w={25} $ml={6}>
          <Glyph viewBox="0 0 16 16" style={{ stroke: '#888' }}>
            <path d="M0 0l16 16M16 0L0 16" />
          </Glyph>
        </StatusBtn>
        <StatusBtn $w={36} $ml={6}>
          <Glyph viewBox="0 0 16 16">
            <path d="M1 12L11 4M1 14.500h13" stroke="#888" strokeWidth="1.200" />
            <path d="M6 8l2 3" />
          </Glyph>
          <CaretSlot>
            <Caret />
          </CaretSlot>
        </StatusBtn>
        <StatusBtn $w={36} $ml={3}>
          <Glyph viewBox="0 0 16 16">
            <path d="M1 4h6M4 1v6" />
            <path d="M6 10h9v4H6z" fill="#666" />
          </Glyph>
          <CaretSlot>
            <Caret />
          </CaretSlot>
        </StatusBtn>
        <StatusBtn $w={25} $ml={3}>
          <Glyph viewBox="0 0 16 16">
            <path d="M1.500 1.500h10v11h-10z" strokeWidth="1.600" />
            <path d="M4 4h6v6H4z" fill="#666" />
            <path d="M11 10v5l4-2.500z" fill="#666" stroke="none" />
          </Glyph>
        </StatusBtn>
        <StatusBtn $w={25} $ml={3}>
          <Glyph viewBox="0 0 16 16" style={{ stroke: '#888' }}>
            <path d="M2 15c0-6 3-10 12-12" />
            <circle cx="14" cy="3" r="1.500" />
            <path d="M9 9v4l3-2z" fill="#555" stroke="none" />
          </Glyph>
        </StatusBtn>
        <Hint>在此选择柱纵筋在底部生根时的做法。</Hint>
      </Status>

      <Annotations viewBox="0 0 1469 943">
        <polygon points="428,719 443,713 444,716 555,739 779,794 555,749 446,731 442,732" fill="#1fae23" />
        <polygon points="398,745 417,747 412,750 496,825 404,755 403,761" fill="#1fae23" />
      </Annotations>
    </Page>
  );
}
